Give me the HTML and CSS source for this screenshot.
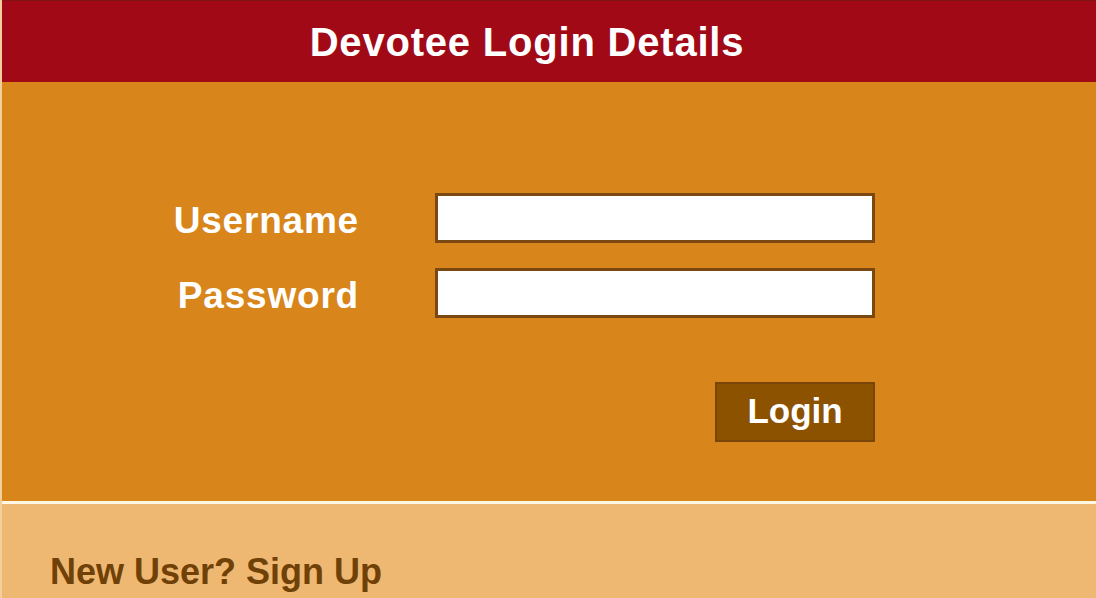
FILE: index.html
```html
<!DOCTYPE html>
<html lang="en">
<head>
<meta charset="utf-8">
<title>Devotee Login Details</title>
<link rel="stylesheet" href="styles.css">
</head>
<body>
<div class="page">
  <header class="header">
    <h1 class="title">Devotee Login Details</h1>
  </header>
  <section class="login">
    <form class="form" onsubmit="return false;">
      <div class="row">
        <label class="label" for="username">Username</label>
        <input class="field" id="username" type="text">
      </div>
      <div class="row">
        <label class="label" for="password">Password</label>
        <input class="field" id="password" type="password">
      </div>
      <div class="actions">
        <button class="btn" type="submit">Login</button>
      </div>
    </form>
  </section>
  <section class="signup">
    <a class="signup-link" href="#">New User? Sign Up</a>
  </section>
</div>
</body>
</html>
```

FILE: styles.css
```css
html, body {
  margin: 0;
  padding: 0;
  height: 100%;
}
body {
  background: #f4cf9c;
  font-family: "Liberation Sans", Arial, sans-serif;
  overflow: hidden;
}
.page {
  margin-left: 2px;
  display: flex;
  flex-direction: column;
  height: 598px;
}
.header {
  background: #a10916;
  border-top: 1px solid #7e1414;
  height: 82px;
  box-sizing: border-box;
  display: flex;
  align-items: center;
  justify-content: center;
  padding-right: 44px;
}
.title {
  margin: 0;
  color: #ffffff;
  font-size: 40px;
  font-weight: bold;
  letter-spacing: 0.8px;
  line-height: 46px;
}
.login {
  background: #d8851b;
  height: 419px;
  padding: 111px 0 0 155px;
  box-sizing: border-box;
}
.form {
  width: 720px;
  display: flex;
  flex-direction: column;
  gap: 25px;
}
.row {
  display: flex;
  align-items: center;
  gap: 76px;
  height: 50px;
}
.label {
  width: 202px;
  height: 50px;
  box-sizing: border-box;
  text-align: right;
  color: #ffffff;
  font-size: 37px;
  font-weight: bold;
  letter-spacing: 0.8px;
  line-height: 44px;
  padding-top: 6px;
}
.field {
  width: 440px;
  height: 50px;
  box-sizing: border-box;
  border: 3px solid #7b4812;
  background: #ffffff;
  margin: 0;
  padding: 0 8px;
  font-size: 20px;
  outline: none;
}
.actions {
  display: flex;
  justify-content: flex-end;
  padding-right: 2px;
  margin-top: 39px;
}
.btn {
  width: 160px;
  height: 60px;
  box-sizing: border-box;
  background: #8c5200;
  border: 2px solid #7a4508;
  color: #ffffff;
  font-family: "Liberation Sans", Arial, sans-serif;
  font-size: 35px;
  font-weight: bold;
  padding: 0 0 3px;
  cursor: pointer;
}
.signup {
  flex: 1;
  background: #efb872;
  border-top: 3px solid #fff6e4;
  padding: 48px 0 0 48px;
}
.signup-link {
  color: #6f4107;
  font-size: 36px;
  font-weight: bold;
  line-height: 40px;
  text-decoration: none;
}
```
